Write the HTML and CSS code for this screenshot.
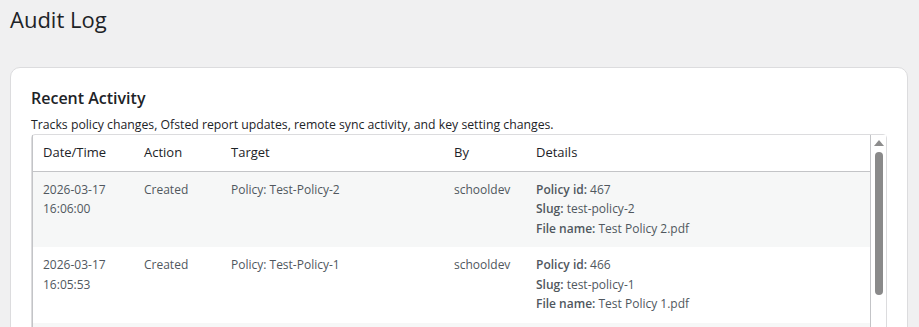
FILE: index.html
```html
<!DOCTYPE html>
<html lang="en">
<head>
    <meta charset="UTF-8">
    <meta name="viewport" content="width=device-width, initial-scale=1.0">
    <title>Audit Log</title>
    <link rel="stylesheet" href="styles.css">
</head>
<body>
    <div class="wrap">
        <h1>Audit Log</h1>

        <!-- Recent activity card -->
        <div class="card">
            <h2>Recent Activity</h2>
            <p class="description">Tracks policy changes, Ofsted report updates, remote sync activity, and key setting changes.</p>

            <div class="table-box">
                <div class="table-scroll">
                    <table class="log-table">
                        <thead>
                            <tr>
                                <th class="col-date">Date/Time</th>
                                <th class="col-action">Action</th>
                                <th class="col-target">Target</th>
                                <th class="col-by">By</th>
                                <th>Details</th>
                            </tr>
                        </thead>
                        <tbody>
                            <tr class="alt">
                                <td>2026-03-17<br>16:06:00</td>
                                <td>Created</td>
                                <td>Policy: Test-Policy-2</td>
                                <td>schooldev</td>
                                <td>
                                    <strong>Policy id:</strong> 467<br>
                                    <strong>Slug:</strong> test-policy-2<br>
                                    <strong>File name:</strong> Test Policy 2.pdf
                                </td>
                            </tr>
                            <tr>
                                <td>2026-03-17<br>16:05:53</td>
                                <td>Created</td>
                                <td>Policy: Test-Policy-1</td>
                                <td>schooldev</td>
                                <td>
                                    <strong>Policy id:</strong> 466<br>
                                    <strong>Slug:</strong> test-policy-1<br>
                                    <strong>File name:</strong> Test Policy 1.pdf
                                </td>
                            </tr>
                            <!-- next row, below the fold -->
                            <tr class="alt empty">
                                <td></td>
                                <td></td>
                                <td></td>
                                <td></td>
                                <td></td>
                            </tr>
                        </tbody>
                    </table>
                </div>

                <!-- Scrollbar -->
                <div class="scrollbar">
                    <div class="scroll-arrow"></div>
                    <div class="scroll-thumb"></div>
                </div>
            </div>
        </div>
    </div>
</body>
</html>
```

FILE: styles.css
```css
html {
    overflow: hidden;
}
body {
    margin: 0;
    background-color: #f0f0f1;
    color: #1d2327;
    font-family: 'Open Sans', sans-serif;
    font-size: 13px;
}
.wrap {
    padding: 0 11px 0 10px;
}
h1 {
    margin: 0;
    padding: 5px 0 0;
    font-size: 22px;
    font-weight: 400;
    line-height: 1.3;
    color: #1d2327;
}
.card {
    margin-top: 33px;
    padding: 19px 20px 20px;
    background-color: #ffffff;
    border: 1px solid #dcdcde;
    border-radius: 10px;
}
h2 {
    margin: 0;
    font-size: 16px;
    font-weight: 600;
    line-height: 1.4;
}
.description {
    margin: 7px 0 0;
    font-size: 12.25px;
    line-height: 1.5;
    color: #1d2327;
}
.table-box {
    display: flex;
    height: 300px;
    border: 1px solid #dcdcde;
    border-radius: 4px;
}
.table-scroll {
    flex: 1;
    overflow: hidden;
    border-right: 1px solid #c3c4c7;
    border-left: 1px solid #c3c4c7;
}
.log-table {
    width: 100%;
    border-collapse: collapse;
    table-layout: fixed;
}
.log-table th {
    padding: 8px 10px 9px;
    font-size: 13px;
    font-weight: 400;
    line-height: 1.4;
    text-align: left;
    color: #1d2327;
    border-bottom: 1px solid #c3c4c7;
}
.log-table td {
    padding: 8px 10px 9px;
    font-size: 12px;
    line-height: 19.5px;
    color: #50575e;
    vertical-align: top;
}
.log-table td strong {
    font-weight: 600;
}
.log-table tr.alt td {
    background-color: #f6f7f7;
}
.log-table tr.empty td {
    height: 58px;
}
.col-date { width: 81px; }
.col-action { width: 67px; }
.col-target { width: 203px; }
.col-by { width: 62px; }

/* Fake scrollbar */
.scrollbar {
    width: 15px;
    display: flex;
    flex-direction: column;
    align-items: center;
    background-color: #ffffff;
}
.scroll-arrow {
    margin-top: 5px;
    width: 0;
    height: 0;
    border-left: 5px solid transparent;
    border-right: 5px solid transparent;
    border-bottom: 6px solid #8c8c8c;
}
.scroll-thumb {
    margin-top: 6px;
    width: 8px;
    height: 143px;
    background-color: #8a8a8a;
    border-radius: 4px;
}
```
